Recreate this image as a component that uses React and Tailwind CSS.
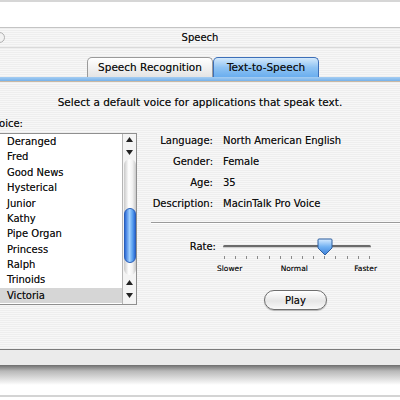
import React from "react";

const stripes =
  "bg-[repeating-linear-gradient(to_bottom,#eeeeee_0px,#eeeeee_1px,#f7f7f7_1px,#f7f7f7_2px)]";

const voices = [
  "Deranged",
  "Fred",
  "Good News",
  "Hysterical",
  "Junior",
  "Kathy",
  "Pipe Organ",
  "Princess",
  "Ralph",
  "Trinoids",
  "Victoria",
];

function Up() {
  return (
    <svg width="7" height="5" viewBox="0 0 7 5">
      <path d="M3.5 0 L7 5 L0 5 Z" fill="#222" />
    </svg>
  );
}
function Down() {
  return (
    <svg width="7" height="5" viewBox="0 0 7 5">
      <path d="M0 0 L7 0 L3.5 5 Z" fill="#222" />
    </svg>
  );
}

export default function App() {
  const ticks = Array.from({ length: 14 });
  return (
    <div
      className="w-[400px] h-[400px] bg-white overflow-hidden flex flex-col text-[#111] [text-shadow:0_0_0.6px_rgba(0,0,0,0.55)]"
      style={{ fontFamily: '"DejaVu Sans", "Liberation Sans", sans-serif' }}
    >
      <div className="h-[2px] bg-[#d6d6d6]" />
      <div className="h-[25px] bg-white" />
      {/* window */}
      <div className="h-[323px] flex flex-col border-b border-[#7a7a7a]">
        {/* title bar */}
        <div
          className={`relative h-[20px] border-t border-[#c4c4c4] ${stripes} flex items-center justify-center text-[10px]`}
        >
          <div className="absolute left-[-6px] top-[4px] w-[11px] h-[11px] rounded-full border border-[#b0b0b0] bg-[#f2f2f2]" />
          <span>Speech</span>
        </div>
        {/* body */}
        <div className={`flex-1 flex flex-col border-t border-[#dadada] ${stripes}`}>
          {/* tabs */}
          <div className="pt-[9px] pl-[87px] flex items-end h-[29px]">
            <div className="h-[20px] w-[126px] rounded-t-[5px] border border-b-0 border-[#9a9a9a] bg-[linear-gradient(to_bottom,#ffffff,#e4e4e4)] flex items-center justify-center text-[10.5px]">
              Speech Recognition
            </div>
            <div className="h-[20px] w-[106px] rounded-t-[5px] border border-b-0 border-[#3d6fb8] bg-[linear-gradient(to_bottom,#d4e9fb,#8fc3f3_50%,#6aaeef)] flex items-center justify-center text-[10.5px]">
              Text-to-Speech
            </div>
          </div>
          <div className="h-[5px] bg-[linear-gradient(to_bottom,#a6cdf2,#76b2ea)] border-b border-[#c8b9a6]" />
          {/* content */}
          <div className="pt-[13px] text-center text-[10.5px]">
            Select a default voice for applications that speak text.
          </div>
          <div className="flex mt-[7px]">
            {/* left column */}
            <div className="w-[137px] flex flex-col">
              <div className="ml-[-7px] text-[10px] leading-[12px]">Voice:</div>
              <div className="mt-[3px] h-[172px] border-t border-r border-b border-[#8f8f8f] bg-white flex">
                <div className="flex-1 flex flex-col pt-[0px]">
                  {voices.map((v) => (
                    <div
                      key={v}
                      className={`h-[15.4px] pl-[7px] flex items-center text-[10px] ${
                        v === "Victoria" ? "bg-[#d6d6d6]" : ""
                      }`}
                    >
                      {v}
                    </div>
                  ))}
                </div>
                {/* scrollbar */}
                <div className="w-[14px] border-l border-[#b5b5b5] bg-[#f4f4f4] flex flex-col items-center">
                  <div className="h-[25px] flex flex-col items-center justify-center gap-[8px]">
                    <Up />
                    <Down />
                  </div>
                  <div className="flex-1 w-[12px] rounded-full bg-[linear-gradient(to_right,#c9c9c9,#ffffff_40%,#f2f2f2_70%,#c9c9c9)] flex flex-col pt-[49px]">
                    <div className="h-[55px] w-[12px] rounded-full border border-[#2a5fb8] bg-[linear-gradient(to_right,#2c6ad6,#9fd0ff_45%,#5aa0ef_75%,#2c6ad6)]" />
                  </div>
                  <div className="h-[29px] flex flex-col items-center justify-center gap-[8px]">
                    <Up />
                    <Down />
                  </div>
                </div>
              </div>
            </div>
            {/* right column */}
            <div className="flex-1 flex flex-col pt-[12px]">
              <div className="grid grid-cols-[76px_1fr] gap-x-[10px] text-[10px]">
                {[
                  ["Language:", "North American English"],
                  ["Gender:", "Female"],
                  ["Age:", "35"],
                  ["Description:", "MacinTalk Pro Voice"],
                ].map(([l, v]) => (
                  <React.Fragment key={l}>
                    <div className="h-[21px] flex items-center justify-end">{l}</div>
                    <div className="h-[21px] flex items-center">{v}</div>
                  </React.Fragment>
                ))}
              </div>
              <div className="ml-[14px] mt-[8px] border-t border-[#9a9a9a] border-b-white border-b" />
              {/* rate */}
              <div className="flex mt-[16px]">
                <div className="w-[79px] text-right text-[10px] leading-[14px]">Rate:</div>
                <div className="ml-[7px] w-[148px] flex flex-col">
                  <div className="relative h-[14px] flex items-center">
                    <div className="w-full h-[3px] rounded-full bg-[#6a6a6a] border-b border-[#cfcfcf]" />
                    <svg
                      className="absolute left-[94px] top-[-2px]"
                      width="16"
                      height="18"
                      viewBox="0 0 16 18"
                    >
                      <defs>
                        <linearGradient id="th" x1="0" y1="0" x2="0" y2="1">
                          <stop offset="0" stopColor="#d8ecff" />
                          <stop offset="0.5" stopColor="#6fb0f2" />
                          <stop offset="1" stopColor="#3c7fd8" />
                        </linearGradient>
                      </defs>
                      <path
                        d="M2 1 H14 Q15 1 15 2 V10 L8 17 L1 10 V2 Q1 1 2 1 Z"
                        fill="url(#th)"
                        stroke="#2f5f9f"
                        strokeWidth="1"
                      />
                    </svg>
                  </div>
                  <div className="flex justify-between px-[1px] mt-[2px]">
                    {ticks.map((_, i) => (
                      <div key={i} className="w-[1px] h-[3px] bg-[#8a8a8a]" />
                    ))}
                  </div>
                  <div className="flex justify-between text-[7.5px] mt-[4px] ml-[-6px] mr-[-6px]">
                    <span>Slower</span>
                    <span className="mr-[8px]">Normal</span>
                    <span>Faster</span>
                  </div>
                </div>
              </div>
              <div className="flex mt-[16px] pl-[127px]">
                <div className="w-[63px] h-[20px] rounded-full border border-[#6e6e6e] bg-[linear-gradient(to_bottom,#ffffff,#e6e6e6_55%,#f8f8f8)] shadow-[0_1px_1px_rgba(0,0,0,0.25)] flex items-center justify-center text-[10px]">
                  Play
                </div>
              </div>
            </div>
          </div>
        </div>
      </div>
      {/* below window */}
      <div className="h-[15px] bg-[#ebebeb]" />
      <div className="h-[20px] bg-[linear-gradient(to_bottom,#6e6e6e,#b8b8b8_30%,#f4f4f4_90%,#ffffff)]" />
      <div className="h-[10px] bg-white" />
      <div className="h-[2px] bg-[#d4d4d4]" />
      <div className="flex-1 bg-white" />
    </div>
  );
}
